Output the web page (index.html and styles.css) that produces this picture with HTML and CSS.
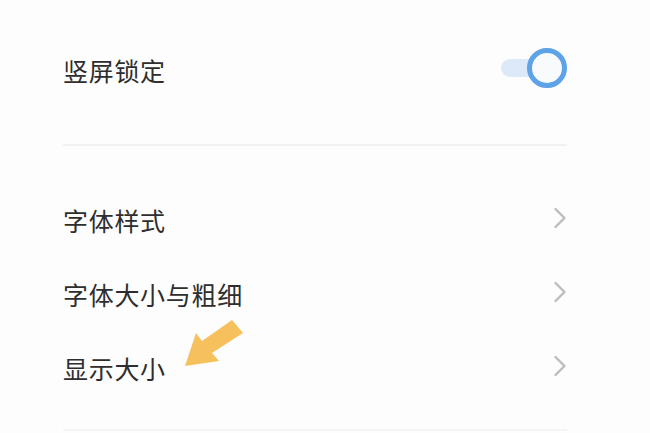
FILE: index.html
```html
<!DOCTYPE html>
<html lang="zh-CN">
<head>
<meta charset="utf-8">
<link rel="stylesheet" href="styles.css">
</head>
<body>
<div class="page">
  <div class="row">
    <span class="label">竖屏锁定</span>
    <div class="toggle"><div class="track"></div><div class="knob"></div></div>
  </div>
  <div class="divider first"></div>
  <div class="row link">
    <span class="label">字体样式</span>
    <svg class="chev" width="14" height="22" viewBox="0 0 14 22"><path d="M2.5 2 L11.5 11 L2.5 20" fill="none" stroke="#bdbdbd" stroke-width="2.4" stroke-linecap="round" stroke-linejoin="round"/></svg>
  </div>
  <div class="row link">
    <span class="label">字体大小与粗细</span>
    <svg class="chev" width="14" height="22" viewBox="0 0 14 22"><path d="M2.5 2 L11.5 11 L2.5 20" fill="none" stroke="#bdbdbd" stroke-width="2.4" stroke-linecap="round" stroke-linejoin="round"/></svg>
  </div>
  <div class="row link">
    <span class="label">显示大小</span>
    <svg class="chev" width="14" height="22" viewBox="0 0 14 22"><path d="M2.5 2 L11.5 11 L2.5 20" fill="none" stroke="#bdbdbd" stroke-width="2.4" stroke-linecap="round" stroke-linejoin="round"/></svg>
  </div>
  <div class="divider last"></div>
</div>
<svg class="arrow" width="650" height="433" viewBox="0 0 650 433">
  <polygon points="185,366 196,333 202,341 232,320 243,333 212,353 219,361" fill="#f6c15d"/>
</svg>
</body>
</html>
```

FILE: styles.css
```css
html, body {
  margin: 0;
  padding: 0;
  background: #fdfdfd;
}
body {
  width: 650px;
  height: 433px;
  overflow: hidden;
  position: relative;
  font-family: "Noto Sans CJK SC", "Noto Sans", sans-serif;
  color: #2e2e2e;
}
.page {
  padding: 33px 83px 0 63px;
}
.row {
  height: 74px;
  display: flex;
  align-items: center;
  justify-content: space-between;
}
.label {
  font-size: 25px;
  line-height: 30px;
  letter-spacing: 0.7px;
}
.link .label {
  margin-top: 2px;
}
.chev {
  display: block;
  margin-right: 0;
  margin-top: -2px;
}
.toggle {
  position: relative;
  width: 66px;
  height: 40px;
  margin-bottom: 4px;
}
.track {
  position: absolute;
  left: 0;
  top: 11px;
  width: 50px;
  height: 18px;
  border-radius: 9px;
  background: #dde9f9;
}
.knob {
  position: absolute;
  right: 0;
  top: 0;
  width: 30px;
  height: 30px;
  border: 5px solid #5ea2e8;
  border-radius: 50%;
  background: #f9fafc;
}
.divider {
  height: 2px;
  background: #f1f1f1;
}
.divider.first {
  margin-top: 37px;
  margin-bottom: 36px;
}
.divider.last {
  margin-top: 25px;
  background: #f5f5f5;
}
.arrow {
  position: absolute;
  left: 0;
  top: 0;
  pointer-events: none;
}
```
